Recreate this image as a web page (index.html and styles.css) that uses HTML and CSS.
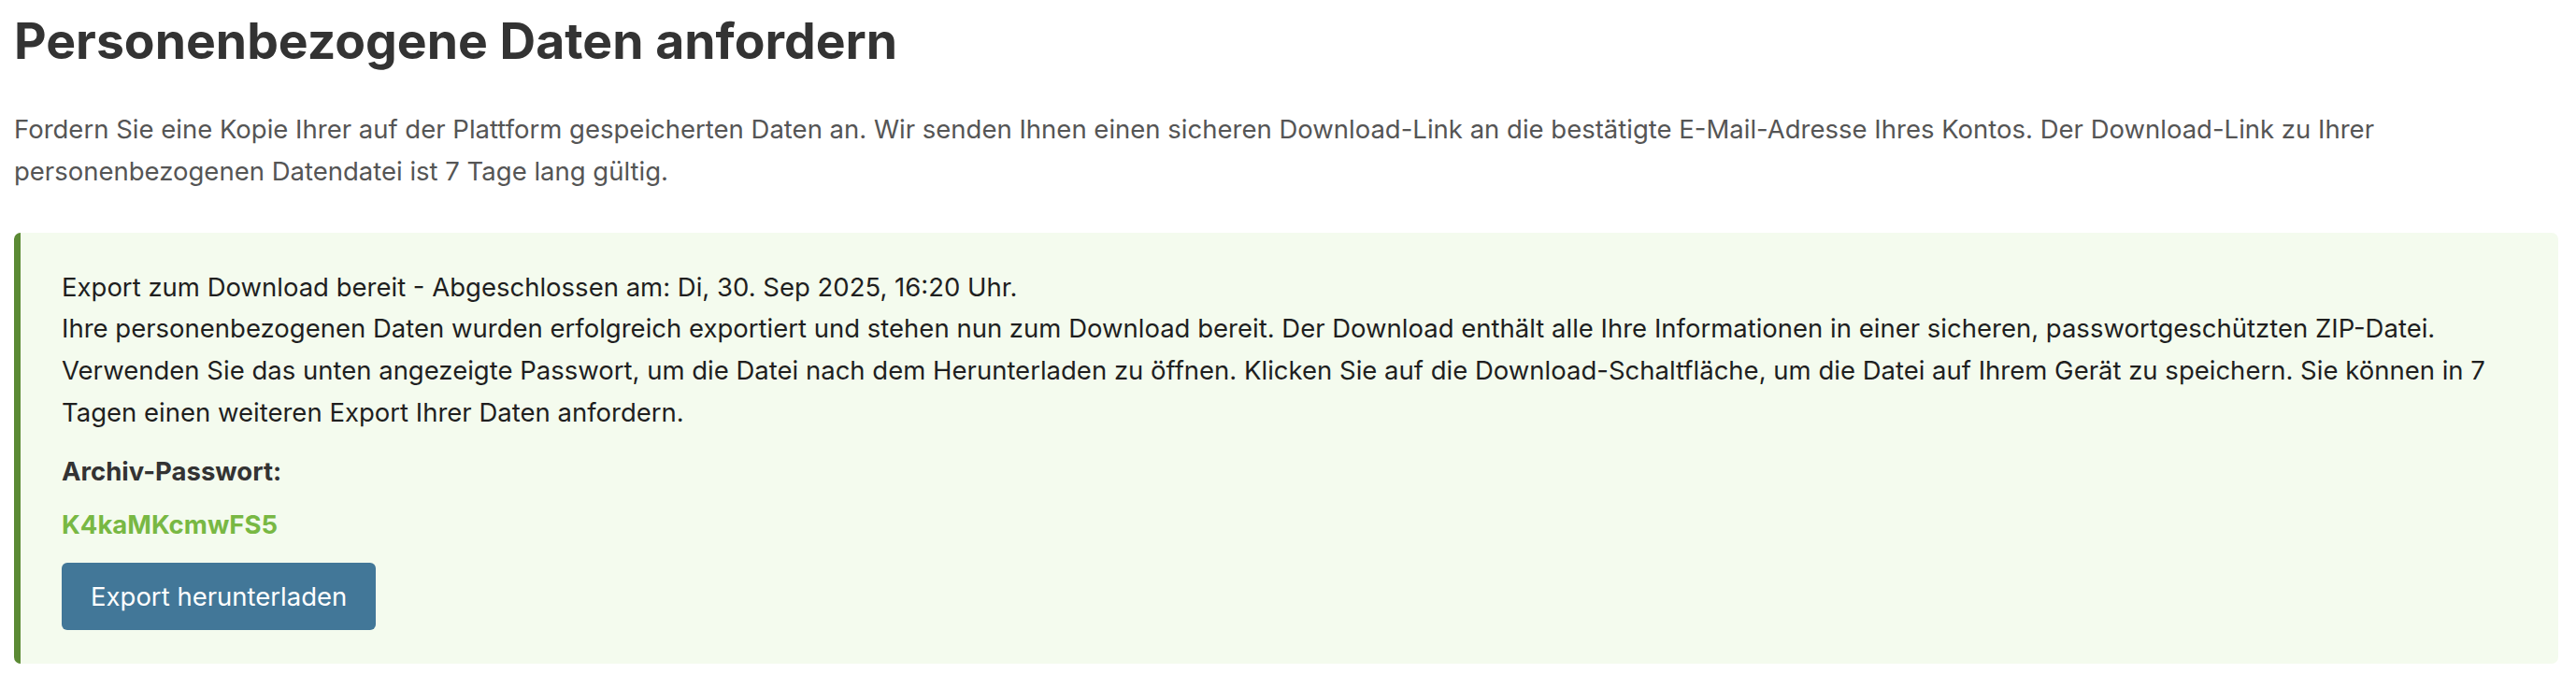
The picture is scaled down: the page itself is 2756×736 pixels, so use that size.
FILE: index.html
```html
<!DOCTYPE html>
<html lang="de">
<head>
<meta charset="utf-8">
<title>Personenbezogene Daten anfordern</title>
<link rel="stylesheet" href="styles.css">
</head>
<body>
<main class="page">
  <h1 class="title">Personenbezogene Daten anfordern</h1>
  <p class="intro">Fordern Sie eine Kopie Ihrer auf der Plattform gespeicherten Daten an. Wir senden Ihnen einen sicheren Download-Link an die bestätigte E-Mail-Adresse Ihres Kontos. Der Download-Link zu Ihrer personenbezogenen Datendatei ist 7 Tage lang gültig.</p>
  <section class="notice">
    <p class="notice-text">Export zum Download bereit - Abgeschlossen am: Di, 30. Sep 2025, 16:20 Uhr.<br>Ihre personenbezogenen Daten wurden erfolgreich exportiert und stehen nun zum Download bereit. Der Download enthält alle Ihre Informationen in einer sicheren, passwortgeschützten ZIP-Datei. Verwenden Sie das unten angezeigte Passwort, um die Datei nach dem Herunterladen zu öffnen. Klicken Sie auf die Download-Schaltfläche, um die Datei auf Ihrem Gerät zu speichern. Sie können in 7 Tagen einen weiteren Export Ihrer Daten anfordern.</p>
    <p class="pw-label">Archiv-Passwort:</p>
    <p class="pw-value">K4kaMKcmwFS5</p>
    <button class="btn" type="button">Export herunterladen</button>
  </section>
</main>
</body>
</html>
```

FILE: styles.css
```css
html, body {
  margin: 0;
  padding: 0;
  background: #ffffff;
}

body {
  font-family: Inter, "Noto Sans", "Liberation Sans", sans-serif;
  font-size: 27.5px;
  line-height: 44.8px;
  color: #222222;
}

.page {
  padding: 10px 19px 0 15px;
  display: flex;
  flex-direction: column;
}

.title {
  margin: 0;
  font-size: 53.5px;
  line-height: 67px;
  font-weight: 700;
  color: #333333;
}

.intro {
  margin: 39px 0 0 0;
  color: #555555;
}

.notice {
  margin-top: 43px;
  background: #f4fbee;
  border-left: 7px solid #5b8a34;
  border-radius: 7px;
  padding: 36px 45px 36px 44px;
  display: flex;
  flex-direction: column;
  align-items: flex-start;
}

.notice-text {
  margin: 0;
  color: #1f1f1f;
}

.pw-label {
  margin: 18px 0 0 0;
  font-weight: 700;
  color: #333333;
}

.pw-value {
  margin: 12px 0 0 0;
  font-weight: 700;
  color: #78b843;
}

.btn {
  margin-top: 19px;
  height: 72px;
  padding: 0 31px;
  border: none;
  border-radius: 6px;
  background: #427798;
  color: #ffffff;
  font-family: inherit;
  font-size: 27.5px;
  cursor: pointer;
}
```
